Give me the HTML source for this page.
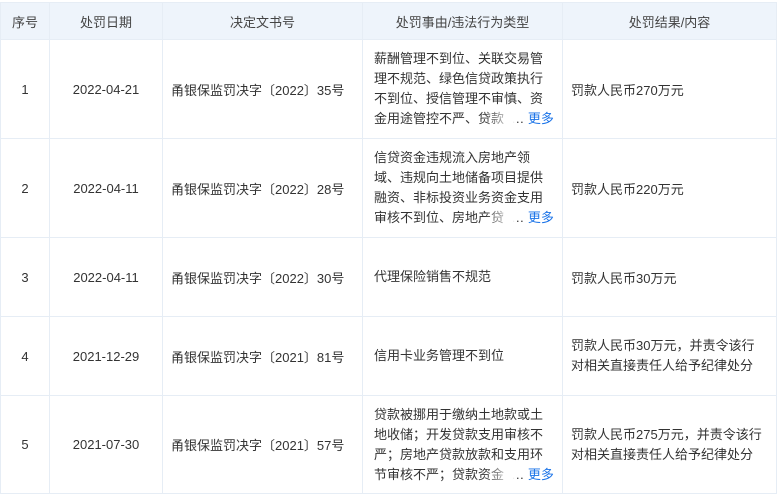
<!DOCTYPE html>
<html><head><meta charset="utf-8"><style>
body{margin:0;background:#fff;font-family:"Liberation Sans","Noto Sans CJK SC",sans-serif;font-size:13px;color:#333;}
table{position:absolute;left:0;top:2px;border-collapse:collapse;table-layout:fixed;width:776px;}
td,th{border:1px solid #e6edf5;padding:0;text-align:center;vertical-align:middle;font-weight:normal;}
th{background:#eef4fb;height:36px;color:#444;}
td.l{text-align:left;padding-left:8px;padding-right:14px;}
td.d{text-align:left;padding-left:8px;}
.r{line-height:20px;text-align:left;padding:0 8px 0 11px;}
.last{white-space:nowrap;position:relative;}
.fade{background:linear-gradient(to right,rgba(255,255,255,0),#fff);position:absolute;left:110px;top:0;width:32px;height:20px;}
.more{color:#1a73e8;}
</style></head><body>
<table>
<colgroup><col style="width:49px"><col style="width:113px"><col style="width:200px"><col style="width:200px"><col style="width:214px"></colgroup>
<tr><th>序号</th><th>处罚日期</th><th>决定文书号</th><th>处罚事由/违法行为类型</th><th>处罚结果/内容</th></tr>
<tr style="height:99px"><td>1</td><td>2022-04-21</td><td class="d">甬银保监罚决字〔2022〕35号</td><td class="r">薪酬管理不到位、关联交易管理不规范、绿色信贷政策执行不到位、授信管理不审慎、资<div class="last">金用途管控不严、贷款<span class="fade"></span> &nbsp;… <span class="more">更多</span></div></td><td class="l">罚款人民币270万元</td></tr>
<tr style="height:99px"><td>2</td><td>2022-04-11</td><td class="d">甬银保监罚决字〔2022〕28号</td><td class="r">信贷资金违规流入房地产领域、违规向土地储备项目提供融资、非标投资业务资金支用<div class="last">审核不到位、房地产贷<span class="fade"></span> &nbsp;… <span class="more">更多</span></div></td><td class="l">罚款人民币220万元</td></tr>
<tr style="height:79px"><td>3</td><td>2022-04-11</td><td class="d">甬银保监罚决字〔2022〕30号</td><td class="r">代理保险销售不规范</td><td class="l">罚款人民币30万元</td></tr>
<tr style="height:79px"><td>4</td><td>2021-12-29</td><td class="d">甬银保监罚决字〔2021〕81号</td><td class="r">信用卡业务管理不到位</td><td class="l" style="line-height:20px">罚款人民币30万元，并责令该行<br>对相关直接责任人给予纪律处分</td></tr>
<tr style="height:98px"><td>5</td><td>2021-07-30</td><td class="d">甬银保监罚决字〔2021〕57号</td><td class="r">贷款被挪用于缴纳土地款或土地收储；开发贷款支用审核不严；房地产贷款放款和支用环<div class="last">节审核不严；贷款资金<span class="fade"></span> &nbsp;… <span class="more">更多</span></div></td><td class="l" style="line-height:20px">罚款人民币275万元，并责令该行<br>对相关直接责任人给予纪律处分</td></tr>
</table>
</body></html>
